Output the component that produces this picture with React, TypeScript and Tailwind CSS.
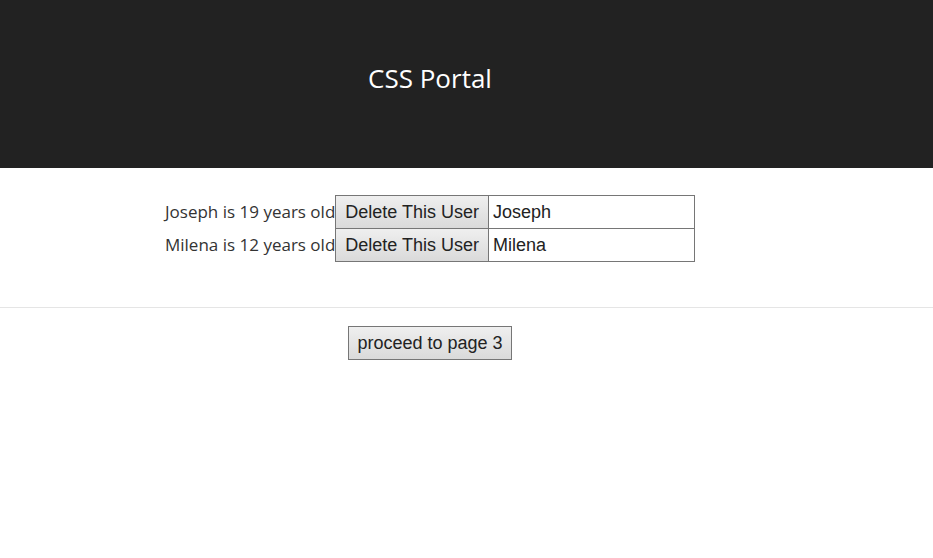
const users = [
    { name: 'Joseph', age: 19 },
    { name: 'Milena', age: 12 },
];

export default function App() {
    return (
        <div className="min-h-[558px] bg-white">
            <header className="h-[168px] bg-[#222222]">
                <div className="w-[860px] h-full flex items-center justify-center">
                    <h1 className="text-white text-[26px] font-['Open_Sans',sans-serif] -mt-[12px]">CSS Portal</h1>
                </div>
            </header>

            <div className="w-[860px] pt-[27px] pb-[45px] flex flex-col items-center">
                {users.map((user, i) => (
                    <div key={user.name} className={`flex items-center ${i > 0 ? '-mt-px' : ''}`}>
                        <span className="text-[#333] text-[17px] font-['Open_Sans',sans-serif]">
                            {user.name} is {user.age} years old
                        </span>
                        <button className="h-[34px] px-[9px] border border-[#767676] bg-gradient-to-b from-[#efefef] to-[#dadada] text-[#222] text-[18px] font-['Liberation_Sans',sans-serif]">
                            Delete This User
                        </button>
                        <input
                            defaultValue={user.name}
                            className="h-[34px] w-[207px] -ml-px px-[4px] border border-[#767676] text-[#222] text-[18px] font-['Liberation_Sans',sans-serif] outline-none"
                        />
                    </div>
                ))}
            </div>

            <div className="border-t border-[#e5e5e5]" />

            <div className="w-[860px] pt-[18px] flex justify-center">
                <button className="h-[34px] px-[8px] border border-[#767676] bg-gradient-to-b from-[#efefef] to-[#dadada] text-[#222] text-[18px] font-['Liberation_Sans',sans-serif]">
                    proceed to page 3
                </button>
            </div>
        </div>
    );
}
